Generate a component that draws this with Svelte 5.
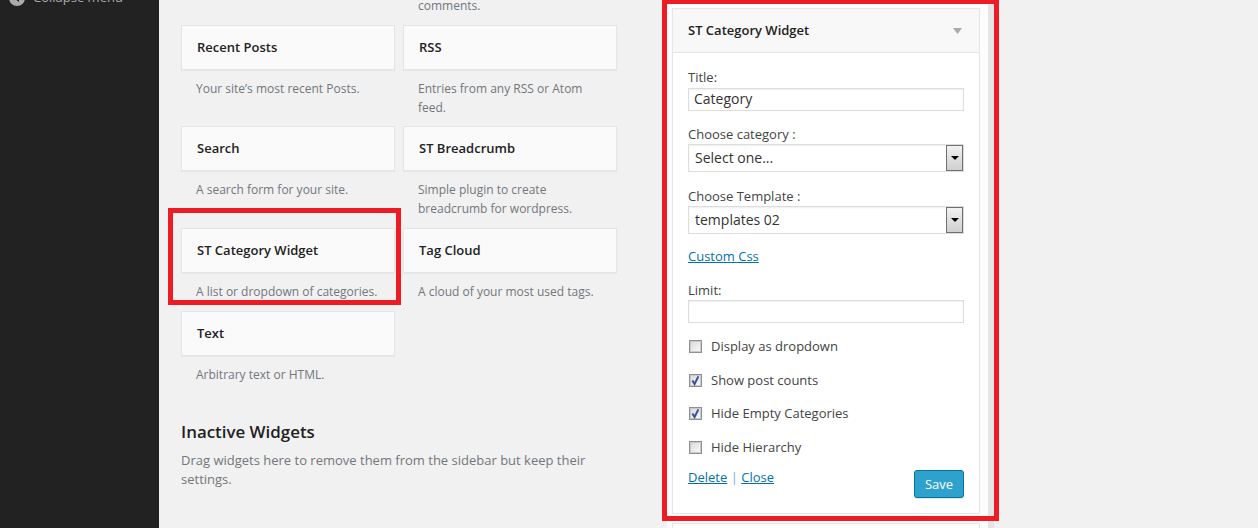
<script>
  const widgets = [
    { name: 'Recent Posts', desc: 'Your site’s most recent Posts.' },
    { name: 'RSS', desc: 'Entries from any RSS or Atom feed.' },
    { name: 'Search', desc: 'A search form for your site.' },
    { name: 'ST Breadcrumb', desc: 'Simple plugin to create breadcrumb for wordpress.' },
    { name: 'ST Category Widget', desc: 'A list or dropdown of categories.' },
    { name: 'Tag Cloud', desc: 'A cloud of your most used tags.' },
    { name: 'Text', desc: 'Arbitrary text or HTML.' },
  ];

  const options = [
    { label: 'Display as dropdown', checked: false },
    { label: 'Show post counts', checked: true },
    { label: 'Hide Empty Categories', checked: true },
    { label: 'Hide Hierarchy', checked: false },
  ];
</script>

<div class="page">
  <aside class="adminmenu">
    <div class="collapse">
      <span class="collapse-icon">
        <svg width="16" height="16" viewBox="0 0 16 16">
          <circle cx="8" cy="8" r="8" fill="#aaa" />
          <path d="M10 4v8L5 8z" fill="#222" />
        </svg>
      </span>
      <span>Collapse menu</span>
    </div>
  </aside>

  <main class="available">
    <div class="widget-list">
      <p class="desc spill">comments.</p>
      {#each widgets as w}
        <div class="widget">
          <div class="widget-top">{w.name}</div>
          <p class="desc">{w.desc}</p>
        </div>
      {/each}
    </div>

    <section class="inactive">
      <h3>Inactive Widgets</h3>
      <p>Drag widgets here to remove them from the sidebar but keep their settings.</p>
    </section>
  </main>

  <section class="sidebar-panel">
    <div class="card">
      <header class="card-head">
        <span>ST Category Widget</span>
        <svg width="9" height="6" viewBox="0 0 9 6"><path d="M0 0h9L4.5 6z" fill="#aaa" /></svg>
      </header>
      <div class="card-body">
        <div class="field">
          <span class="label title">Title:</span>
          <div class="input">Category</div>
        </div>
        <div class="field wide">
          <span class="label">Choose category :</span>
          <div class="select">
            <span>Select one...</span>
            <span class="select-btn"><i></i></span>
          </div>
        </div>
        <div class="field">
          <span class="label">Choose Template :</span>
          <div class="select">
            <span>templates 02</span>
            <span class="select-btn"><i></i></span>
          </div>
        </div>
        <div class="field wide"><a class="block" href="#css">Custom Css</a></div>
        <div class="field wide">
          <span class="label tight">Limit:</span>
          <div class="input"></div>
        </div>
        <div class="checks">
          {#each options as o}
            <div class="check">
              <span class="box">
                {#if o.checked}
                  <svg width="11" height="11" viewBox="0 0 11 11">
                    <path d="M2.4 5.4 4.6 9 8.4 1.4" fill="none" stroke="#33519c" stroke-width="2" />
                  </svg>
                {/if}
              </span>
              {o.label}
            </div>
          {/each}
        </div>
        <div class="actions">
          <span class="links"><a href="#delete">Delete</a> <span class="sep">|</span> <a href="#close">Close</a></span>
          <button class="save">Save</button>
        </div>
      </div>
    </div>
    <div class="card next"></div>
  </section>

  <div class="mark mark-small"></div>
  <div class="mark mark-big"></div>
</div>

<style>
  :global(body) {
    margin: 0;
    background: #f1f1f1;
  }

  .page {
    position: relative;
    display: flex;
    height: 528px;
    overflow: hidden;
    background: #f1f1f1;
    color: #444;
    font-family: "Open Sans", sans-serif;
    font-size: 13px;
    line-height: 19.5px;
  }

  .adminmenu {
    width: 159px;
    flex-shrink: 0;
    background: #222;
  }

  .collapse {
    display: flex;
    align-items: center;
    gap: 8px;
    margin-top: -12px;
    padding-left: 9px;
    color: #aaa;
  }

  .collapse-icon {
    display: flex;
  }

  .available {
    width: 458px;
    flex-shrink: 0;
    padding-left: 22px;
    box-sizing: border-box;
  }

  .widget-list {
    display: grid;
    grid-template-columns: 214px 214px;
    column-gap: 8px;
    row-gap: 9.6px;
    margin-top: -4.3px;
  }

  .spill {
    grid-column: 2;
    padding: 0 15px !important;
    height: 19.5px;
  }

  .widget-top {
    height: 45px;
    box-sizing: border-box;
    padding-left: 15px;
    border: 1px solid #e5e5e5;
    box-shadow: 0 1px 1px rgba(0, 0, 0, 0.04);
    background: #fafafa;
    color: #222;
    font-weight: 600;
    line-height: 43px;
  }

  .desc {
    margin: 0;
    padding: 9px 15px 0;
    color: #72777c;
    font-size: 12px;
    line-height: 19px;
  }

  .inactive {
    margin-top: 36px;
  }

  .inactive h3 {
    margin: 0;
    color: #222;
    font-size: 16.9px;
    font-weight: 600;
    line-height: 23px;
  }

  .inactive p {
    margin: 8px 0 0;
    color: #72777c;
  }

  .sidebar-panel {
    width: 308px;
    height: 528px;
    flex-shrink: 0;
    margin-left: 50px;
    padding: 8px 8px 0 5px;
    background: #fcfcfc;
    border-right: 6px solid #e5e5e5;
  }

  .card {
    border: 1px solid #e5e5e5;
    background: #fff;
    width: 306px;
    height: 504px;
  }

  .card.next {
    margin-top: 9px;
    height: 40px;
  }

  .card-head {
    display: flex;
    align-items: center;
    justify-content: space-between;
    height: 43px;
    padding: 0 17px 0 15px;
    background: #f8f8f8;
    border-bottom: 1px solid #e5e5e5;
    color: #222;
    font-weight: 600;
  }

  .card-body {
    padding: 14px 15px 0;
  }

  .field {
    margin-bottom: 13px;
  }

  .field.wide {
    margin-bottom: 14px;
  }

  .label {
    display: block;
    box-sizing: border-box;
    height: 20px;
    padding-top: 1px;
  }

  .label.title {
    height: 21px;
  }

  .label.tight {
    height: 19px;
    padding-top: 0;
  }

  .block {
    display: block;
    width: fit-content;
    height: 20px;
  }

  .input,
  .select {
    box-sizing: border-box;
    width: 276px;
    border: 1px solid #ddd;
    box-shadow: inset 0 1px 2px rgba(0, 0, 0, 0.07);
    background: #fff;
    color: #333;
    font-size: 14px;
  }

  .input {
    height: 23px;
    padding-left: 5px;
    line-height: 19px;
  }

  .select {
    display: flex;
    justify-content: space-between;
    height: 28px;
    padding-left: 6px;
    line-height: 26px;
  }

  .select-btn {
    display: flex;
    align-items: center;
    justify-content: center;
    box-sizing: border-box;
    width: 17px;
    height: 26px;
    border: 1px solid #707070;
    background: linear-gradient(#f2f2f2, #cfcfcf);
  }

  .select-btn i {
    display: block;
    width: 0;
    height: 0;
    border-left: 4px solid transparent;
    border-right: 4px solid transparent;
    border-top: 4px solid #000;
  }

  a {
    color: #0073aa;
    text-decoration: underline;
  }

  .checks {
    display: flex;
    flex-direction: column;
    gap: 14px;
  }

  .check {
    display: flex;
    align-items: center;
    gap: 9px;
    padding-left: 1px;
  }

  .box {
    display: flex;
    align-items: center;
    justify-content: center;
    box-sizing: border-box;
    width: 13px;
    height: 13px;
    border: 1px solid #8e8f8f;
    box-shadow: inset 0 0 0 1px #c9c9c9;
    background: linear-gradient(135deg, #d8d8d8, #fbfbfb);
  }

  .actions {
    display: flex;
    justify-content: space-between;
    margin-top: 10px;
  }

  .links {
    padding-top: 1px;
  }

  .sep {
    color: #72aee6;
  }

  .save {
    height: 28px;
    width: 50px;
    margin-top: 3px;
    padding: 1px 0 0;
    border: 1px solid #0074a2;
    border-radius: 3px;
    background: #2ea2cc;
    box-shadow: 0 1px 0 rgba(0, 0, 0, 0.1);
    color: #fff;
    font: inherit;
  }

  .mark {
    position: absolute;
    box-sizing: border-box;
    border: 5px solid #ed1c24;
    pointer-events: none;
  }

  .mark-small {
    left: 168px;
    top: 208px;
    width: 233px;
    height: 97px;
  }

  .mark-big {
    left: 662px;
    top: -1px;
    width: 337px;
    height: 522px;
  }
</style>
